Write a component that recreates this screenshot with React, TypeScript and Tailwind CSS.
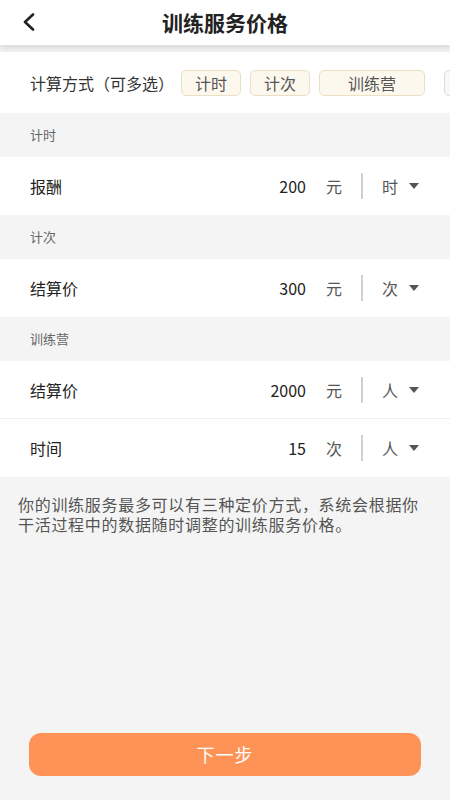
import React from 'react';

type Row = { label: string; value: string; unit: string; per: string };

const SECTIONS: { title: string; rows: Row[] }[] = [
  { title: '计时', rows: [{ label: '报酬', value: '200', unit: '元', per: '时' }] },
  { title: '计次', rows: [{ label: '结算价', value: '300', unit: '元', per: '次' }] },
  {
    title: '训练营',
    rows: [
      { label: '结算价', value: '2000', unit: '元', per: '人' },
      { label: '时间', value: '15', unit: '次', per: '人' },
    ],
  },
];

const FONT = "font-['Noto_Sans_CJK_SC','Noto_Sans',sans-serif]";

function PriceRow({ row, border }: { row: Row; border: boolean }) {
  return (
    <div
      className={`flex h-[58px] items-center bg-white pl-[30px] pr-[31px] ${
        border ? 'border-b border-[#efefef]' : ''
      }`}
    >
      <span className="flex-1 text-[16px] text-[#222]">{row.label}</span>
      <span className="text-right text-[16px] text-[#222]">{row.value}</span>
      <span className="ml-[20px] text-[16px] text-[#555]">{row.unit}</span>
      <span className="ml-[19px] h-[26px] w-[2px] bg-[#d0d0d0]" />
      <span className="ml-[19px] text-[16px] text-[#555]">{row.per}</span>
      <svg width="10" height="6" viewBox="0 0 10 6" className="ml-[11px]">
        <path d="M0 0 L10 0 L5 6 Z" fill="#555" />
      </svg>
    </div>
  );
}

export default function App() {
  return (
    <div className={`flex min-h-[800px] w-[450px] flex-col bg-[#f4f4f4] ${FONT}`}>
      {/* 标题栏 */}
      <div className="relative z-10 flex h-[45px] items-center justify-center bg-white shadow-[0_3px_6px_rgba(0,0,0,0.12)]">
        <svg
          width="14"
          height="18"
          viewBox="0 0 14 18"
          className="absolute left-[22px] top-[13px]"
        >
          <path d="M11 1.5 L3 9 L11 16.5" fill="none" stroke="#222" strokeWidth="2.6" strokeLinecap="round" strokeLinejoin="round" />
        </svg>
        <span className="text-[21px] font-bold text-[#222]">训练服务价格</span>
      </div>

      {/* 计算方式 */}
      <div className="mt-[7px] flex h-[61px] items-center overflow-hidden whitespace-nowrap bg-white pl-[30px]">
        <span className="text-[16px] text-[#333]">计算方式（可多选）</span>
        <div className="ml-[7px] flex gap-[9px]">
          {[
            { t: '计时', w: 'w-[60px]' },
            { t: '计次', w: 'w-[60px]' },
            { t: '训练营', w: 'w-[106px]' },
          ].map((c) => (
            <span
              key={c.t}
              className={`flex h-[26px] ${c.w} shrink-0 items-center justify-center rounded-[5px] border border-[#ecdfc4] bg-[#fdf8ee] text-[16px] text-[#555]`}
            >
              {c.t}
            </span>
          ))}
          <span className="ml-[10px] h-[26px] w-[60px] shrink-0 rounded-[5px] border border-[#dcdcdc] bg-[#f8f8f8]" />
        </div>
      </div>

      {/* 价格分组 */}
      {SECTIONS.map((s) => (
        <div key={s.title}>
          <div className="flex h-[44px] items-center pl-[30px] text-[13px] text-[#666]">{s.title}</div>
          {s.rows.map((r, i) => (
            <PriceRow key={r.label + i} row={r} border={i < s.rows.length - 1} />
          ))}
        </div>
      ))}

      <p className="px-[18px] pt-[17px] text-[16px] leading-[20px] tracking-[0.7px] text-[#555]">
        你的训练服务最多可以有三种定价方式，系统会根据你干活过程中的数据随时调整的训练服务价格。
      </p>

      <div className="flex-1" />

      <div className="px-[29px] pb-[24px]">
        <button className="flex h-[43px] w-full items-center justify-center rounded-[12px] bg-[#fd9356] text-[18px] tracking-[1px] text-white">
          下一步
        </button>
      </div>
    </div>
  );
}
